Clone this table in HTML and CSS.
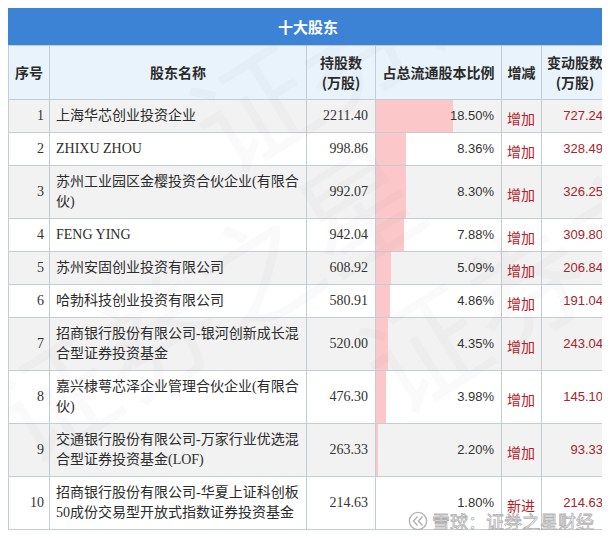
FILE: index.html
```html
<!DOCTYPE html>
<html lang="zh-CN">
<head>
<meta charset="utf-8">
<title>十大股东</title>
<link rel="stylesheet" href="styles.css">
</head>
<body>
<div class="page">
  <div class="title">十大股东</div>
  <table class="grid">
    <colgroup>
      <col class="c-no"><col class="c-name"><col class="c-hold"><col class="c-pct"><col class="c-chg"><col class="c-amt">
    </colgroup>
    <thead>
      <tr>
        <th>序号</th>
        <th>股东名称</th>
        <th>持股数<br>(万股)</th>
        <th>占总流通股本比例</th>
        <th>增减</th>
        <th>变动股数<br>(万股)</th>
      </tr>
    </thead>
    <tbody>
      <tr><td class="no">1</td><td class="name">上海华芯创业投资企业</td><td class="hold">2211.40</td><td class="pct"><div class="bar" style="width:77px"></div><span class="pv">18.50%</span></td><td class="chg">增加</td><td class="amt">727.24</td></tr>
      <tr><td class="no">2</td><td class="name">ZHIXU ZHOU</td><td class="hold">998.86</td><td class="pct"><div class="bar" style="width:30px"></div><span class="pv">8.36%</span></td><td class="chg">增加</td><td class="amt">328.49</td></tr>
      <tr><td class="no">3</td><td class="name">苏州工业园区金樱投资合伙企业(有限合伙)</td><td class="hold">992.07</td><td class="pct"><div class="bar" style="width:30px"></div><span class="pv">8.30%</span></td><td class="chg">增加</td><td class="amt">326.25</td></tr>
      <tr><td class="no">4</td><td class="name">FENG YING</td><td class="hold">942.04</td><td class="pct"><div class="bar" style="width:28px"></div><span class="pv">7.88%</span></td><td class="chg">增加</td><td class="amt">309.80</td></tr>
      <tr><td class="no">5</td><td class="name">苏州安固创业投资有限公司</td><td class="hold">608.92</td><td class="pct"><div class="bar" style="width:15px"></div><span class="pv">5.09%</span></td><td class="chg">增加</td><td class="amt">206.84</td></tr>
      <tr><td class="no">6</td><td class="name">哈勃科技创业投资有限公司</td><td class="hold">580.91</td><td class="pct"><div class="bar" style="width:14px"></div><span class="pv">4.86%</span></td><td class="chg">增加</td><td class="amt">191.04</td></tr>
      <tr><td class="no">7</td><td class="name">招商银行股份有限公司-银河创新成长混合型证券投资基金</td><td class="hold">520.00</td><td class="pct"><div class="bar" style="width:12px"></div><span class="pv">4.35%</span></td><td class="chg">增加</td><td class="amt">243.04</td></tr>
      <tr><td class="no">8</td><td class="name">嘉兴棣萼芯泽企业管理合伙企业(有限合伙)</td><td class="hold">476.30</td><td class="pct"><div class="bar" style="width:10px"></div><span class="pv">3.98%</span></td><td class="chg">增加</td><td class="amt">145.10</td></tr>
      <tr><td class="no">9</td><td class="name">交通银行股份有限公司-万家行业优选混合型证券投资基金(LOF)</td><td class="hold">263.33</td><td class="pct"><div class="bar" style="width:2px"></div><span class="pv">2.20%</span></td><td class="chg">增加</td><td class="amt">93.33</td></tr>
      <tr><td class="no">10</td><td class="name">招商银行股份有限公司-华夏上证科创板50成份交易型开放式指数证券投资基金</td><td class="hold">214.63</td><td class="pct"><span class="pv">1.80%</span></td><td class="chg">新进</td><td class="amt">214.63</td></tr>
    </tbody>
  </table>
  <div class="watermark" aria-hidden="true">
    <span class="wm wm1">证券之星</span>
    <span class="wm wm2">证券之星</span>
    <span class="wm wm3">证券之星</span>
  </div>
  <div class="brand">
    <svg class="brand-icon" width="20" height="20" viewBox="0 0 20 20">
      <circle cx="10" cy="10" r="8.6" fill="rgba(255,255,255,0.7)" stroke="#b4b4b4" stroke-width="1.4"/>
      <path d="M9.5 5.5 L5.5 10 L9.5 14.5" fill="none" stroke="#b4b4b4" stroke-width="1.5"/>
      <path d="M14.5 5.5 L10.5 10 L14.5 14.5" fill="none" stroke="#b4b4b4" stroke-width="1.5"/>
    </svg>
    <span class="brand-text">雪球：证券之星财经</span>
  </div>
</div>
</body>
</html>
```

FILE: styles.css
```css
body {
  margin: 8px;
  background: #ffffff;
}

.page {
  position: relative;
  width: 600px;
  font-family: "Liberation Serif", "Noto Sans CJK SC", serif;
  font-size: 14px;
  color: #333333;
}

.title {
  height: 37px;
  line-height: 37px;
  background: #3c83d6;
  color: #ffffff;
  text-align: center;
  font-family: "Noto Sans CJK SC", sans-serif;
  font-weight: bold;
  font-size: 15px;
}

.grid {
  width: 600px;
  border-collapse: collapse;
  table-layout: fixed;
}

.c-no { width: 41px; }
.c-name { width: 257px; }
.c-hold { width: 69px; }
.c-pct { width: 126px; }
.c-chg { width: 40px; }
.c-amt { width: 67px; }

.grid th,
.grid td {
  border: 1px solid #c4ccd4;
  line-height: 20px;
  padding: 6px 6px;
  vertical-align: middle;
  overflow: hidden;
}

.grid th {
  background: #e9f3fc;
  font-family: "Noto Sans CJK SC", sans-serif;
  font-weight: bold;
  color: #2a2a2a;
  text-align: center;
  padding: 6px 2px 7px;
}

.grid tbody tr:nth-child(odd) td {
  background: #f2f2f2;
}

.grid tbody tr:nth-child(even) td {
  background: #ffffff;
}

.grid td.no {
  text-align: right;
  padding-right: 5px;
}

.name {
  text-align: left;
  color: #2c2c2c;
}

.grid td.hold {
  text-align: right;
  padding-right: 7px;
}

.grid td.pct {
  position: relative;
  text-align: right;
  font-family: "Liberation Sans", "Noto Sans CJK SC", sans-serif;
  font-size: 13px;
  padding-right: 7px;
}

.bar {
  position: absolute;
  left: 0;
  top: 0;
  bottom: 0;
  background: #fcc7c9;
}

.pv {
  position: relative;
}

.grid td.chg {
  color: #b3212a;
  font-family: "Noto Sans CJK SC", sans-serif;
  font-size: 14px;
  white-space: nowrap;
  padding: 8px 0 4px 5px;
}

.grid td.amt {
  text-align: right;
  color: #a8232b;
  font-family: "Liberation Sans", "Noto Sans CJK SC", sans-serif;
  font-size: 13px;
  padding-right: 5px;
}

.watermark {
  position: absolute;
  left: 0;
  top: 37px;
  width: 600px;
  height: 483px;
  overflow: hidden;
  pointer-events: none;
}

.wm {
  position: absolute;
  font-family: "Noto Sans CJK SC", sans-serif;
  font-size: 120px;
  line-height: 1;
  color: rgba(110, 110, 110, 0.035);
  white-space: nowrap;
  transform: rotate(-32deg);
  transform-origin: left top;
}

.wm1 { left: -40px; top: 330px; }
.wm2 { left: 330px; top: 280px; }
.wm3 { left: 160px; top: 40px; }

.brand {
  position: absolute;
  right: 14px;
  bottom: -2px;
  display: flex;
  align-items: center;
  gap: 4px;
  pointer-events: none;
}

.brand-text {
  font-family: "Noto Sans CJK SC", sans-serif;
  font-size: 18px;
  line-height: 22px;
  color: rgba(255, 255, 255, 0.75);
  -webkit-text-stroke: 0.8px rgba(150, 150, 150, 0.75);
}
```
